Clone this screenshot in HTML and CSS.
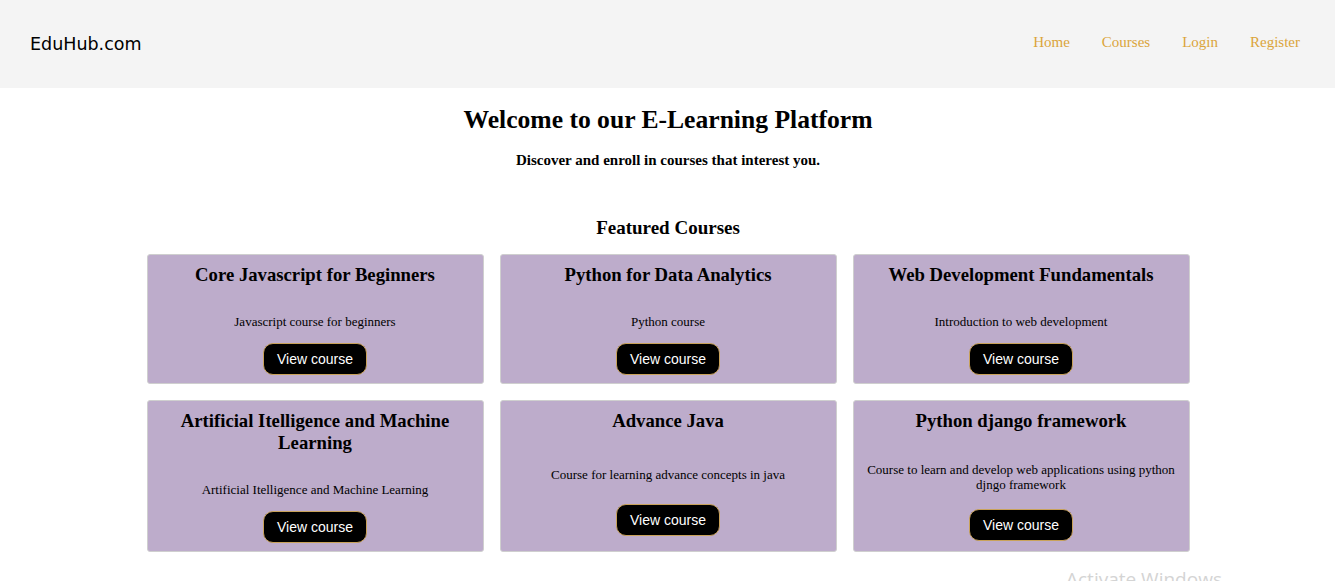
FILE: index.html
```html
<!DOCTYPE html>
<html lang="en">
<head>
<meta charset="utf-8">
<title>EduHub.com</title>
<link rel="stylesheet" href="styles.css">
</head>
<body>
<header class="site-header">
  <div class="logo">EduHub.com</div>
  <nav class="nav">
    <a href="#">Home</a>
    <a href="#">Courses</a>
    <a href="#">Login</a>
    <a href="#">Register</a>
  </nav>
</header>
<main class="main">
  <section class="hero">
    <h1>Welcome to our E-Learning Platform</h1>
    <p>Discover and enroll in courses that interest you.</p>
  </section>
  <section class="featured">
    <h2>Featured Courses</h2>
    <div class="grid">
      <div class="card">
        <h3>Core Javascript for Beginners</h3>
        <p>Javascript course for beginners</p>
        <div><a class="btn" href="#">View course</a></div>
      </div>
      <div class="card">
        <h3>Python for Data Analytics</h3>
        <p>Python course</p>
        <div><a class="btn" href="#">View course</a></div>
      </div>
      <div class="card">
        <h3>Web Development Fundamentals</h3>
        <p>Introduction to web development</p>
        <div><a class="btn" href="#">View course</a></div>
      </div>
      <div class="card">
        <h3>Artificial Itelligence and Machine Learning</h3>
        <p>Artificial Itelligence and Machine Learning</p>
        <div><a class="btn" href="#">View course</a></div>
      </div>
      <div class="card">
        <h3>Advance Java</h3>
        <p>Course for learning advance concepts in java</p>
        <div><a class="btn" href="#">View course</a></div>
      </div>
      <div class="card">
        <h3>Python django framework</h3>
        <p>Course to learn and develop web applications using python djngo framework</p>
        <div><a class="btn" href="#">View course</a></div>
      </div>
    </div>
  </section>
</main>
<div class="watermark">Activate Windows</div>
</body>
</html>
```
FILE: styles.css
```css
html, body {
  margin: 0;
  padding: 0;
}
body {
  font-family: "Liberation Serif", "Times New Roman", serif;
  color: #000;
  background: #fff;
  overflow: hidden;
}
.site-header {
  height: 88px;
  background: #f4f4f4;
  display: flex;
  align-items: center;
  justify-content: space-between;
  padding: 0 35px 0 30px;
}
.logo {
  font-family: "Comic Sans MS", "DejaVu Sans", sans-serif;
  font-size: 17.5px;
  color: #000;
}
.nav {
  display: flex;
  gap: 32px;
  margin-top: -4px;
}
.nav a {
  font-family: "Liberation Serif", serif;
  font-size: 15px;
  color: #dba43a;
  text-decoration: none;
}
.main {
  display: flex;
  flex-direction: column;
  align-items: center;
  padding-left: 1px;
}
.hero {
  text-align: center;
}
.hero h1 {
  font-size: 25.6px;
  margin: 16px 0 0;
  line-height: 32px;
}
.hero p {
  font-size: 15px;
  font-weight: bold;
  margin: 16px 0 0;
}
.featured {
  width: 1043px;
  text-align: center;
}
.featured h2 {
  font-size: 19px;
  margin: 48px 0 15px;
  line-height: 22px;
}
.grid {
  display: grid;
  grid-template-columns: repeat(3, 1fr);
  gap: 16px 16px;
}
.card {
  display: grid;
  background: #bdaccb;
  border: 1px solid #cfcfcf;
  border-radius: 3px;
  padding: 9px 10px 8px;
  text-align: center;
}
.card h3 {
  font-size: 18.72px;
  line-height: 22px;
  margin: 0 0 15px;
}
.card p {
  font-size: 13px;
  line-height: 15px;
  margin: 13px 0 14px;
}
.btn {
  display: inline-block;
  font-family: "Liberation Sans", Arial, sans-serif;
  font-size: 14px;
  line-height: 16px;
  color: #fff;
  background: #000;
  border: 1px solid #c9a25a;
  border-radius: 10px;
  padding: 7px 13px;
  text-decoration: none;
}
.watermark {
  position: absolute;
  left: 1066px;
  top: 566px;
  font-family: "Open Sans", "Noto Sans", sans-serif;
  font-size: 19px;
  color: #d4d4d4;
  pointer-events: none;
}
```
